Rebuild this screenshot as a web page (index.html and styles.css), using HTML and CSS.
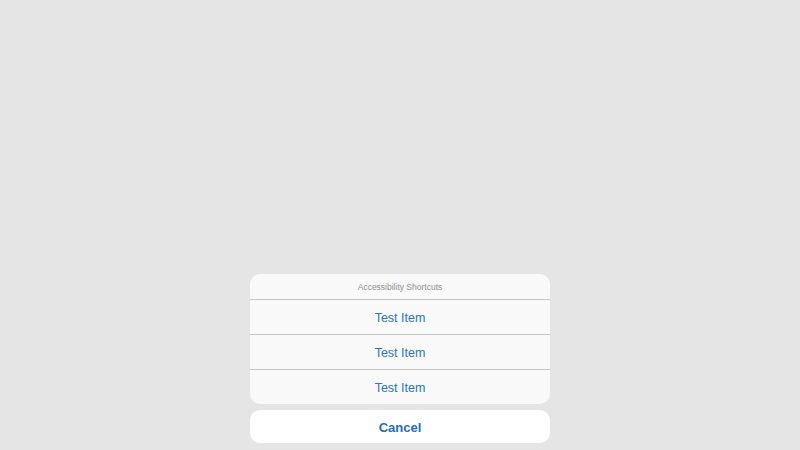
FILE: index.html
```html
<!DOCTYPE html>
<html lang="en">
<head>
    <meta charset="UTF-8">
    <meta name="viewport" content="width=device-width, initial-scale=1.0">
    <title>Action Sheet</title>
    <link rel="stylesheet" href="styles.css">
</head>
<body>
    <div class="action-sheet">
        <div class="sheet-group">
            <div class="sheet-title">Accessibility Shortcuts</div>
            <button type="button" class="sheet-item">Test Item</button>
            <button type="button" class="sheet-item">Test Item</button>
            <button type="button" class="sheet-item">Test Item</button>
        </div>
        <button type="button" class="sheet-cancel">Cancel</button>
    </div>
</body>
</html>
```

FILE: styles.css
```css
body {
    margin: 0;
    font-family: "Liberation Sans", Arial, sans-serif;
    background-color: #e5e5e5;
    display: flex;
    flex-direction: column;
    justify-content: flex-end;
    align-items: center;
    height: 100vh;
}

.action-sheet {
    width: 300px;
    display: flex;
    flex-direction: column;
    gap: 6px;
    padding-bottom: 7px;
}

.sheet-group {
    background: #f9f9f9;
    border-radius: 10px;
    overflow: hidden;
    display: flex;
    flex-direction: column;
}

.sheet-title {
    height: 25px;
    line-height: 27px;
    text-align: center;
    font-size: 8.5px;
    color: #8e8e8e;
}

.sheet-item {
    height: 35px;
    border: none;
    border-top: 1px solid #c4c4c4;
    background: transparent;
    font-family: inherit;
    font-size: 12.5px;
    color: #2a74bd;
    cursor: pointer;
    padding: 2px 0 0;
}

.sheet-cancel {
    height: 33px;
    border: none;
    border-radius: 10px;
    background: #fff;
    font-family: inherit;
    font-size: 13px;
    font-weight: bold;
    color: #1f6cbc;
    cursor: pointer;
    padding: 2px 0 0;
}
```
